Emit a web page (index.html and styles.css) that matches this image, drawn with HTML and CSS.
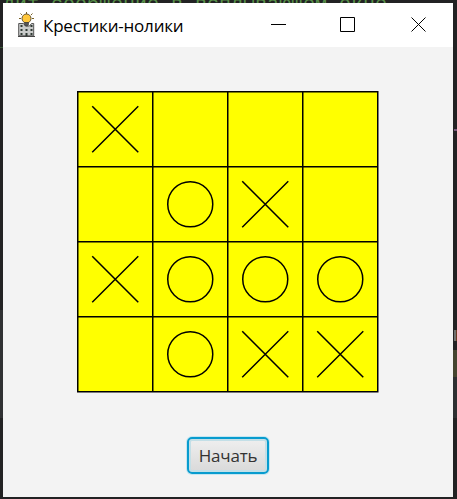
FILE: index.html
```
<!DOCTYPE html>
<html lang="ru">
<head>
<meta charset="utf-8">
<title>Крестики-нолики</title>
<link rel="stylesheet" href="styles.css">
</head>
<body>
<div class="backdrop">дит сообщение в всплывающем окне</div>
<i class="edge edge-pink"></i><i class="edge edge-caret"></i><i class="edge edge-olive"></i><i class="edge edge-slate"></i><i class="edge edge-left"></i><i class="edge edge-mark"></i>
<main class="window">
  <header class="titlebar">
    <svg class="app-icon" width="20" height="26" viewBox="0 0 20 26">
      <path d="M1.7 11.5h4.8l2 2.5h4l2-2.5h2.2v12.3H1.7z" fill="#c9cbca" stroke="#555" stroke-width="1"/>
      <path d="M1 24.500h17" stroke="#444" stroke-width="1"/>
      <g fill="#303a34"><path d="M3.5 13h2v2h-2zM13.5 13h2v2h-2zM3.5 17h2v2h-2zM8.5 17h2v2h-2zM13.5 17h2v2h-2zM3.5 21h2v2h-2zM8.5 21h2v3h-2zM13.5 21h2v2h-2z"/></g>
      <path d="M9.5 0v2M3.5 1.5l1.5 1.5M15.5 1.5l-1.5 1.5M2 6.5h2M15 6.5h2" stroke="#766025" stroke-width="1"/>
      <circle cx="9.5" cy="6.5" r="4.5" fill="#ffc73b" stroke="#665637" stroke-width="1"/>
      <path d="M7.5 10.5h4v2l-1 1.5h-2l-1-1.5z" fill="#555" stroke="#333" stroke-width=".6"/>
    </svg>
    <h1 class="title">Крестики-нолики</h1>
    <svg class="controls" width="156" height="16" viewBox="0 0 156 16" fill="none" stroke="#000">
      <path d="M0 7.5h15M69.5.5h14v14h-14z"/>
      <path d="M140.5.5l14 14M154.5.5l-14 14"/>
    </svg>
  </header>
  <section class="content">
    <svg class="board" width="303" height="303" viewBox="0 0 303 303" fill="none" stroke="#000" stroke-width="1.5">
      <defs>
        <path id="x" d="M-22.5-22.5l45 45M22.5-22.5l-45 45" stroke-linecap="square"/>
        <circle id="o" r="22.5"/>
      </defs>
      <path fill="#ff0" d="M.75.75h300v300h-300z"/>
      <path d="M75.75.75v300M150.75.75v300M225.75.75v300M.75 75.75h300M.75 150.75h300M.75 225.75h300"/>
      <use href="#x" x="38.25" y="38.25"/>
      <use href="#o" x="113.25" y="113.25"/><use href="#x" x="188.25" y="113.25"/>
      <use href="#x" x="38.25" y="188.25"/><use href="#o" x="113.25" y="188.25"/><use href="#o" x="188.25" y="188.25"/><use href="#o" x="263.25" y="188.25"/>
      <use href="#o" x="113.25" y="263.25"/><use href="#x" x="188.25" y="263.25"/><use href="#x" x="263.25" y="263.25"/>
    </svg>
    <button class="start">Начать</button>
  </section>
</main>
</body>
</html>
```
FILE: styles.css
```
* { box-sizing: border-box; }
body {
  margin: 0;
  width: 457px;
  height: 499px;
  padding: 3px 4px 2px 3px;
  background: #222223;
  overflow: hidden;
  position: relative;
  font-family: "Open Sans", "Noto Sans", sans-serif;
}
.backdrop {
  position: absolute;
  top: -6px;
  left: 3px;
  height: 9px;
  overflow: hidden;
  white-space: pre;
  font: 20px/22px "Liberation Mono", monospace;
  color: #579049;
}
.edge { position: absolute; right: 0; width: 4px; }
.edge-pink { top: 129px; height: 2px; background: #76577a; width: 3px; }
.edge-caret { top: 330px; height: 11px; background: #70706e; border-right: 1px solid #6a3a24; width: 3px; }
.edge-olive { top: 350px; height: 27px; background: #45452f; }
.edge-slate { top: 377px; height: 41px; background: #2d2f31; }
.edge-left { top: 310px; left: 0; width: 3px; height: 108px; background: #303133; }
.edge-mark { top: 47px; left: 0; width: 3px; height: 1px; background: #365733; }
.window {
  position: relative;
  display: flex;
  flex-direction: column;
  height: 494px;
  background: #f3f3f3;
}
.titlebar {
  display: flex;
  height: 44px;
  background: #fff;
  padding: 9px 26px 0 14px;
}
.app-icon { flex: none; }
.title {
  margin: 0 0 0 6px;
  font-size: 17px;
  line-height: 28px;
  font-weight: 400;
  letter-spacing: -0.2px;
  color: #000;
  white-space: nowrap;
}
.controls { margin: 5px 0 0 auto; flex: none; }
.content {
  flex: 1;
  display: flex;
  flex-direction: column;
  align-items: flex-start;
  padding: 44px 0 0 74px;
}
.start {
  margin: 43px 0 0 110px;
  width: 82px;
  height: 37px;
  padding: 1px 0 0;
  border: 2px solid #079bce;
  border-radius: 5px;
  background: linear-gradient(#efefef, #d9d9d9);
  box-shadow: 0 0 0 1px #c5e6f1, inset 0 0 0 2px #c3dfe7;
  font: 17px/32px "Open Sans", "Noto Sans", sans-serif;
  letter-spacing: -0.2px;
  color: #333;
}
```
